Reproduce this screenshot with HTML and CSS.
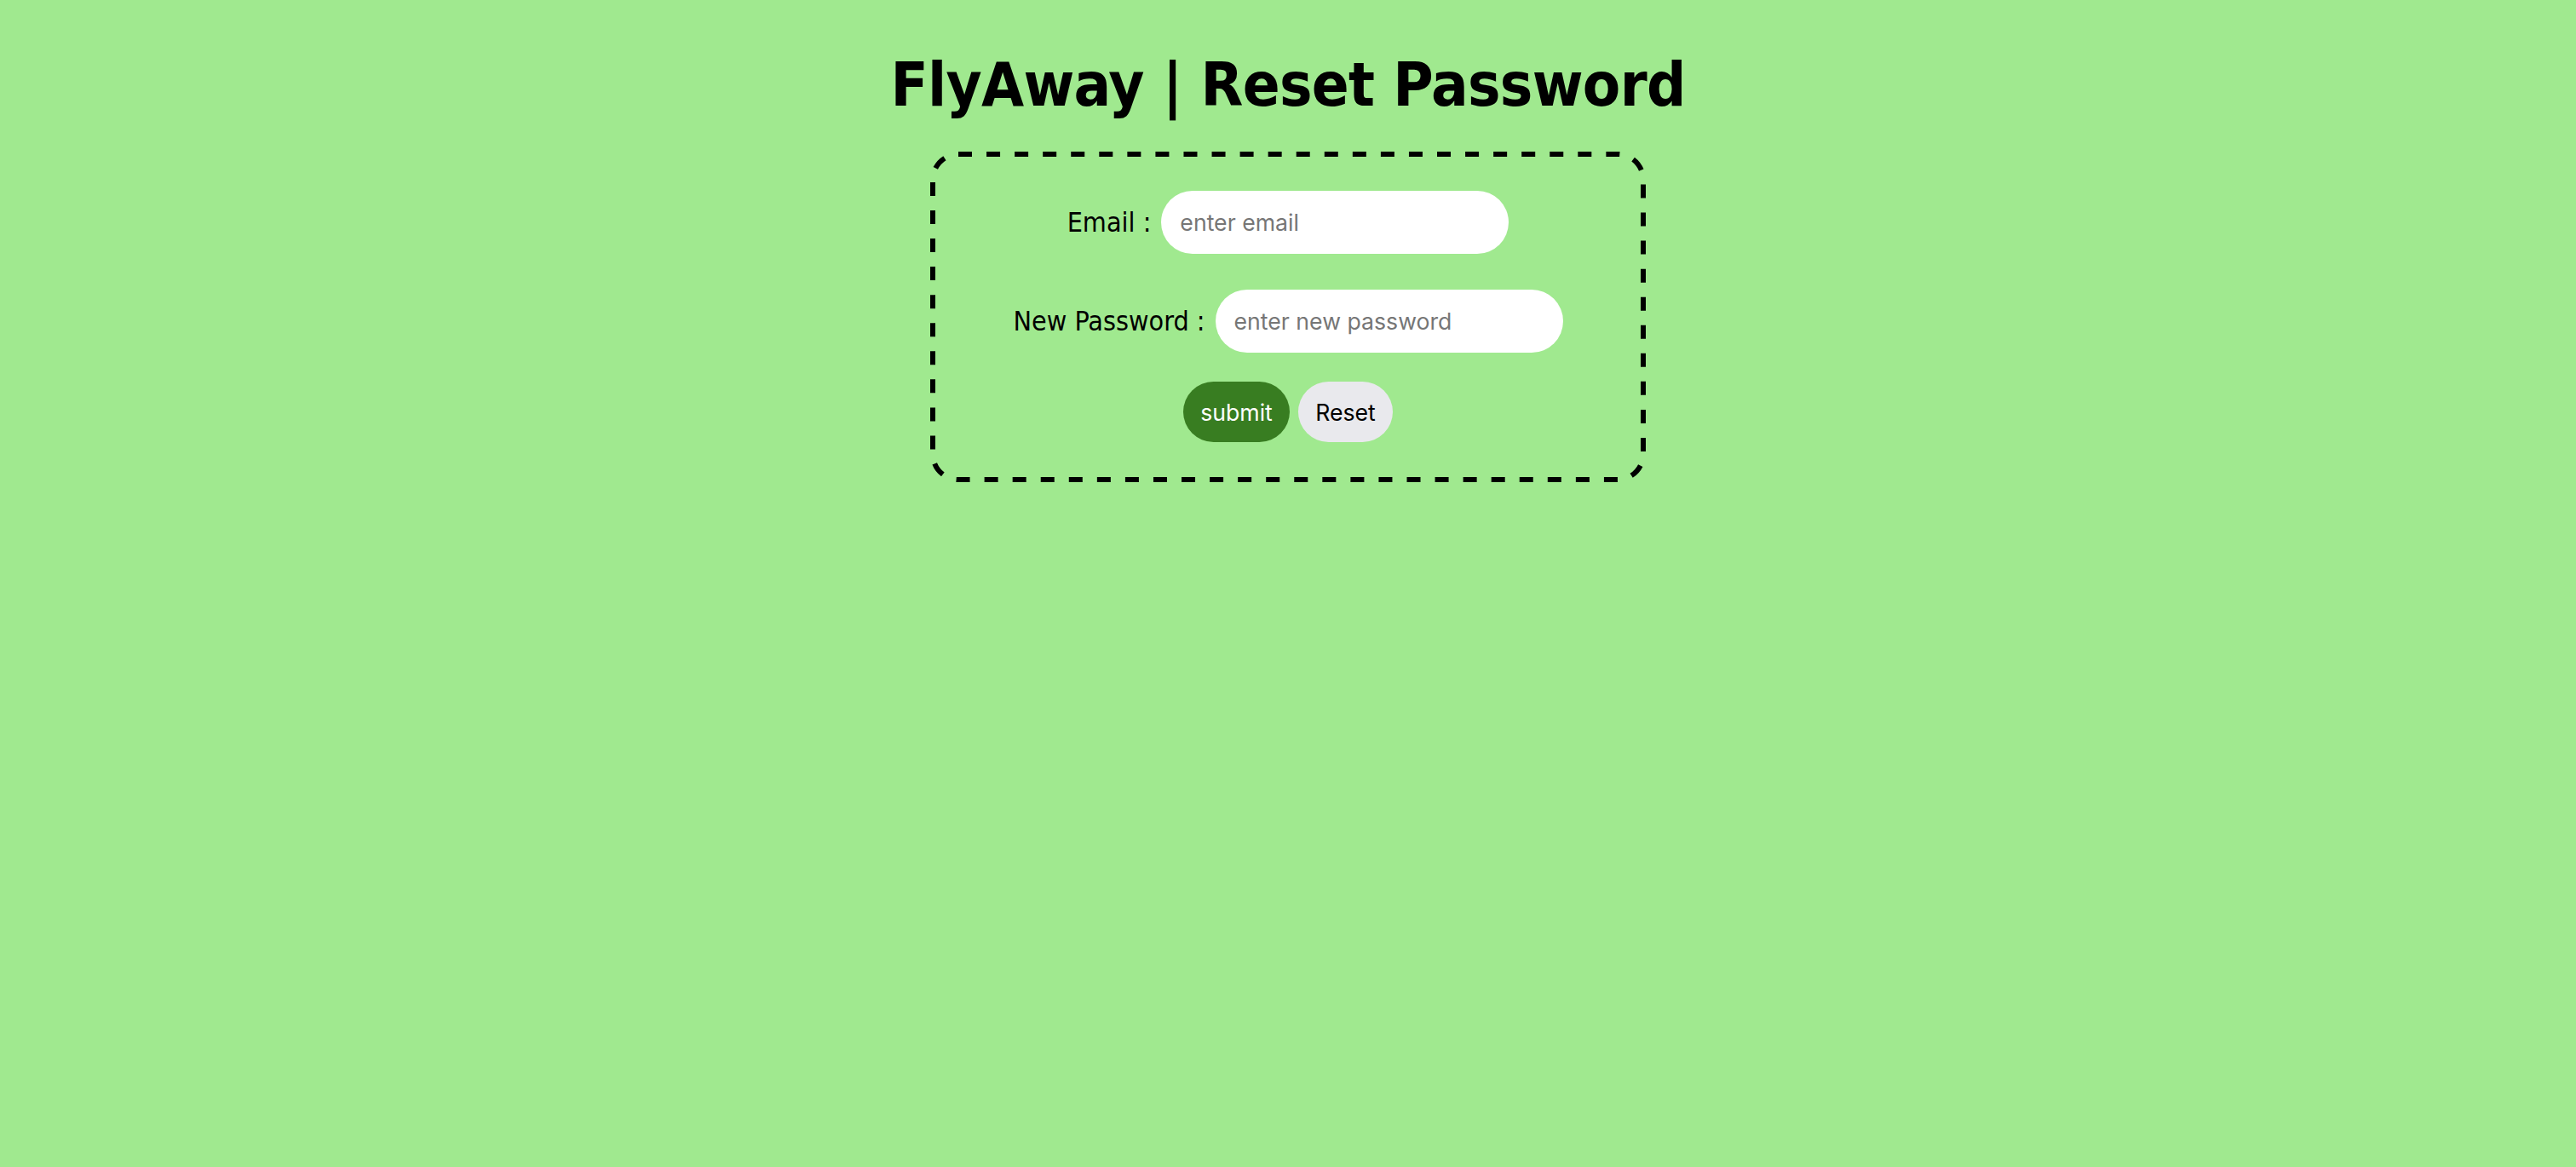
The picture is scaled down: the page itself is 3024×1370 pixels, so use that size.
FILE: index.html
```html
<!DOCTYPE html>
<html lang="en">
<head>
<meta charset="utf-8">
<title>FlyAway | Reset Password</title>
<link rel="stylesheet" href="styles.css">
</head>
<body>
  <h1 class="title">FlyAway | Reset Password</h1>
  <form class="card">
    <svg class="card-border" width="840" height="388" aria-hidden="true">
      <rect class="card-border-rect" x="3" y="3" width="834" height="382" rx="30" ry="30"></rect>
    </svg>
    <div class="row row-email">
      <label class="label" for="email">Email :</label>
      <input class="field" id="email" type="email" placeholder="enter email">
    </div>
    <div class="row row-pass">
      <label class="label" for="pass">New Password :</label>
      <input class="field" id="pass" type="password" placeholder="enter new password">
    </div>
    <div class="row row-buttons">
      <button class="btn btn-submit" type="submit">submit</button>
      <button class="btn btn-reset" type="reset">Reset</button>
    </div>
  </form>
</body>
</html>
```
FILE: styles.css
```css
html, body {
  margin: 0;
  padding: 0;
  background: #a0e98f;
  min-height: 100%;
}
body {
  display: flex;
  flex-direction: column;
  align-items: center;
  font-family: "DejaVu Sans Condensed", "DejaVu Sans", sans-serif;
  color: #000;
}
.title {
  margin: 63px 0 0 0;
  font-size: 72px;
  line-height: 72px;
  font-weight: bold;
  letter-spacing: -0.7px;
}
.card {
  position: relative;
  box-sizing: border-box;
  width: 840px;
  height: 388px;
  margin-top: 43px;
  padding: 46px 0 47px;
  display: flex;
  flex-direction: column;
  align-items: center;
}
.card-border {
  position: absolute;
  left: 0;
  top: 0;
  overflow: visible;
  pointer-events: none;
}
.card-border-rect {
  fill: none;
  stroke: #000;
  stroke-width: 6;
  stroke-dasharray: 16 17.06;
  stroke-dashoffset: 0;
}
.row {
  display: flex;
  align-items: center;
  justify-content: center;
}
.row-pass { margin-top: 42px; }
.row-buttons { margin-top: 34px; gap: 10px; }
.label {
  font-size: 32px;
  margin-right: 12px;
}
.field {
  box-sizing: border-box;
  width: 408px;
  height: 74px;
  border: none;
  border-radius: 37px;
  background: #fff;
  padding: 0 22px;
  font-family: Inter, "Noto Sans", sans-serif;
  font-size: 26.67px;
  outline: none;
}
.field::placeholder { color: #767676; }
.btn {
  box-sizing: border-box;
  height: 71px;
  border: none;
  border-radius: 36px;
  padding: 0 20px;
  font-family: Inter, "Noto Sans", sans-serif;
  font-size: 26.67px;
}
.btn-submit {
  background: #387d21;
  color: #fff;
  width: 125px;
}
.btn-reset {
  background: #e9e9ed;
  color: #000;
  width: 111px;
}
```
